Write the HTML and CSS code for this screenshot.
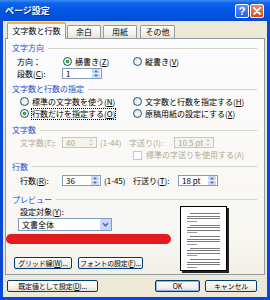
FILE: index.html
```html
<!DOCTYPE html>
<html lang="ja">
<head>
<meta charset="utf-8">
<link rel="stylesheet" href="styles.css">
</head>
<body>
<div class="win">
  <div class="title">
    <span class="ttext">ページ設定</span>
    <span class="tbtn help">?</span>
    <span class="tbtn close"><svg width="8" height="8" viewBox="0 0 8 8"><path d="M1 1L7 7M7 1L1 7" stroke="#fff" stroke-width="1.8" stroke-linecap="round"/></svg></span>
  </div>
  <div class="client">
    <div class="tabs">
      <div class="tab sel">文字数と行数</div>
      <div class="tab t2">余白</div>
      <div class="tab t3">用紙</div>
      <div class="tab t4">その他</div>
    </div>
    <div class="panel">
      <div class="hdr h1">文字方向</div>
      <div class="row r-dir">
        <span class="lbl w46">方向：</span>
        <span class="radio on c1">横書き(<u>Z</u>)</span>
        <span class="radio">縦書き(<u>V</u>)</span>
      </div>
      <div class="row r-cols">
        <span class="lbl w45">段数(<u>C</u>):</span>
        <span class="spin w40"><span class="val">1</span><svg class="arr" width="8" height="9" viewBox="0 0 8 9"><rect width="8" height="4.3" rx="1" fill="#C6D6FC"/><rect y="4.7" width="8" height="4.3" rx="1" fill="#C6D6FC"/><path d="M2 3.2L4 1.2L6 3.2Z" fill="#4D6185"/><path d="M2 5.8L4 7.8L6 5.8Z" fill="#4D6185"/></svg></span>
      </div>
      <div class="hdr h2">文字数と行数の指定</div>
      <div class="row r-rad1">
        <span class="radio c113">標準の文字数を使う(<u>N</u>)</span>
        <span class="radio">文字数と行数を指定する(<u>H</u>)</span>
      </div>
      <div class="row r-rad2">
        <span class="radio on c113"><span class="focus">行数だけを指定する(<u>O</u>)</span></span>
        <span class="radio">原稿用紙の設定にする(<u>X</u>)</span>
      </div>
      <div class="hdr h3">文字数</div>
      <div class="row r-chars dis">
        <span class="lbl w42">文字数(E):</span>
        <span class="spin w35 off"><span class="val">40</span><svg class="arr" width="8" height="9" viewBox="0 0 8 9"><path d="M2 3.2L4 1.2L6 3.2Z" fill="#C9C7BA"/><path d="M2 5.8L4 7.8L6 5.8Z" fill="#C9C7BA"/></svg></span>
        <span class="rng">(1-44)</span>
        <span class="lbl w45">字送り(I):</span>
        <span class="spin w40 off"><span class="val">10.5 pt</span><svg class="arr" width="8" height="9" viewBox="0 0 8 9"><path d="M2 3.2L4 1.2L6 3.2Z" fill="#C9C7BA"/><path d="M2 5.8L4 7.8L6 5.8Z" fill="#C9C7BA"/></svg></span>
      </div>
      <div class="row r-check dis">
        <span class="chk">標準の字送りを使用する(A)</span>
      </div>
      <div class="hdr h4">行数</div>
      <div class="row r-lines">
        <span class="lbl w42">行数(<u>R</u>):</span>
        <span class="spin w39"><span class="val">36</span><svg class="arr" width="8" height="9" viewBox="0 0 8 9"><rect width="8" height="4.3" rx="1" fill="#C6D6FC"/><rect y="4.7" width="8" height="4.3" rx="1" fill="#C6D6FC"/><path d="M2 3.2L4 1.2L6 3.2Z" fill="#4D6185"/><path d="M2 5.8L4 7.8L6 5.8Z" fill="#4D6185"/></svg></span>
        <span class="rng">(1-45)</span>
        <span class="lbl w45">行送り(<u>T</u>):</span>
        <span class="spin w40"><span class="val">18 pt</span><svg class="arr" width="8" height="9" viewBox="0 0 8 9"><rect width="8" height="4.3" rx="1" fill="#C6D6FC"/><rect y="4.7" width="8" height="4.3" rx="1" fill="#C6D6FC"/><path d="M2 3.2L4 1.2L6 3.2Z" fill="#4D6185"/><path d="M2 5.8L4 7.8L6 5.8Z" fill="#4D6185"/></svg></span>
      </div>
      <div class="hdr h5">プレビュー</div>
      <div class="preview">
        <div class="pleft">
          <div class="plabel">設定対象(<u>Y</u>):</div>
          <div class="select"><span class="val">文書全体</span><svg class="darr" width="11" height="11" viewBox="0 0 11 11"><rect width="11" height="11" rx="1.5" fill="#C6D6FC"/><path d="M3 4.2L5.5 6.7L8 4.2" stroke="#4D6185" stroke-width="1.4" fill="none"/></svg></div>
          <div class="redbar"></div>
          <div class="pbtns">
            <span class="btn b1">グリッド線(<u>W</u>)...</span>
            <span class="btn b2">フォントの設定(<u>F</u>)...</span>
          </div>
        </div>
        <div class="page">
          <div class="grp"><i class="ind"></i><i></i><i></i><i class="sh"></i></div>
          <div class="grp"><i class="ind"></i><i></i><i></i><i class="sh"></i></div>
          <div class="grp"><i class="ind"></i><i></i><i></i><i class="sh"></i></div>
          <div class="grp"><i class="ind"></i><i></i><i></i><i class="sh"></i></div>
          <div class="grp"><i class="ind"></i><i></i><i></i><i class="sh"></i></div>
        </div>
      </div>
    </div>
    <div class="footer">
      <span class="btn fb1">既定値として設定(<u>D</u>)...</span>
      <span class="spacer"></span>
      <span class="btn ok">OK</span>
      <span class="btn cancel">キャンセル</span>
    </div>
  </div>
</div>
</body>
</html>
```
FILE: styles.css
```css
* { box-sizing: border-box; margin: 0; padding: 0; }
html, body { width: 270px; height: 300px; overflow: hidden; }
body {
  font-family: "Noto Sans CJK JP", "Noto Sans", sans-serif;
  font-size: 8px;
  color: #000;
  background: #fff;
}
u { text-decoration: underline; text-underline-offset: 1px; }

.win {
  width: 270px;
  height: 300px;
  display: flex;
  flex-direction: column;
  background: #0A48D6;
}
.title {
  height: 21px;
  flex: none;
  display: flex;
  align-items: center;
  padding: 0 6px 0 5px;
  background: linear-gradient(#3C8DF7 0%, #0E62EB 15%, #0156E4 50%, #0152DF 85%, #0A46C6 100%);
}
.ttext {
  flex: 1;
  color: #fff;
  font-weight: bold;
  font-size: 9px;
  line-height: 21px;
  text-shadow: 1px 1px 0 #0A2E8C;
}
.tbtn {
  width: 14px;
  height: 14px;
  border: 1px solid #fff;
  border-radius: 2px;
  display: flex;
  align-items: center;
  justify-content: center;
  color: #fff;
  font-family: "Liberation Sans", sans-serif;
  font-weight: bold;
  font-size: 11px;
}
.help { background: linear-gradient(#5A93F8, #2460E6); margin-right: 1px; }
.close { background: linear-gradient(#EE8866, #D9461E); }

.client {
  flex: 1;
  margin: 0 3px 3px;
  background: #ECE9D8;
  display: flex;
  flex-direction: column;
}

.tabs {
  display: flex;
  align-items: flex-end;
  height: 16px;
  margin: 1px 0 0 4px;
  flex: none;
}
.tab {
  height: 13px;
  line-height: 12px;
  text-align: center;
  border: 1px solid #919B9C;
  border-bottom: none;
  border-radius: 2px 2px 0 0;
  background: linear-gradient(#FFFFFF, #F0EFEA 70%, #E4E2D8);
}
.tab.sel {
  width: 59px;
  height: 17px;
  margin-bottom: -1px;
  position: relative;
  z-index: 1;
  background: #FCFCFE;
  border-top: 2px solid #F8B13B;
  line-height: 14px;
}
.t2 { width: 34px; margin-left: 1px; }
.t3 { width: 34px; margin-left: 2px; }
.t4 { width: 35px; margin-left: 3px; }

.panel {
  height: 237px;
  flex: none;
  margin: 0 2px;
  border: 1px solid #919B9C;
  background: linear-gradient(#FCFCFE, #F7F6F1 85%, #F1EFE6);
  padding: 2px 7px 0 6px;
}
.hdr {
  height: 14px;
  line-height: 14px;
  color: #1A4ED0;
  display: flex;
  align-items: center;
}
.hdr::after {
  content: "";
  flex: 1;
  margin-left: 4px;
  border-top: 1px solid #D6D3C6;
}
.h2 { margin-top: 2px; }
.h3 { margin-top: 3px; }
.h4 { height: 13px; }
.h5 { height: 13px; margin-top: 6px; }

.row {
  display: flex;
  align-items: center;
  padding-left: 8px;
  white-space: nowrap;
}
.r-dir { height: 12px; padding-left: 5px; }
.r-cols { height: 13px; padding-left: 5px; }
.r-rad1 { height: 11px; }
.r-rad2 { height: 13px; }
.r-chars { height: 11px; }
.r-check { height: 12px; padding-left: 121px; }
.r-lines { height: 14px; }

.lbl { display: inline-block; }
.w42 { width: 42px; }
.w45 { width: 45px; }
.w46 { width: 46px; }
.c1 { width: 70px; }
.c113 { width: 113px; }
.rng { width: 32px; padding-left: 3px; }

.dis { color: #ACA899; }

.radio {
  display: inline-flex;
  align-items: center;
}
.radio::before {
  content: "";
  width: 7px;
  height: 7px;
  border-radius: 50%;
  border: 1px solid #1C5180;
  background: radial-gradient(circle at 60% 60%, #FFFFFF, #DCDBD3);
  margin-right: 3px;
  flex: none;
}
.radio.on::before {
  background: radial-gradient(circle, #4CC84C 0, #1F9D1F 1.6px, #FFFFFF 2.2px, #E6E5DD 4px);
}
.focus {
  outline: 1px dotted #000;
  outline-offset: 0;
  line-height: 10px;
}

.chk {
  display: inline-flex;
  align-items: center;
}
.chk::before {
  content: "";
  width: 7px;
  height: 7px;
  border: 1px solid #C9C7BA;
  background: #fff;
  margin-right: 4px;
  margin-top: 3px;
}

.spin {
  height: 11px;
  border: 1px solid #7F9DB9;
  background: #fff;
  display: flex;
  align-items: center;
  justify-content: space-between;
  padding: 0 1px 0 3px;
  color: #000;
}
.spin.off {
  border-color: #C9C7BA;
  background: #F5F4EA;
  color: #ACA899;
}
.w35 { width: 35px; }
.w39 { width: 39px; }
.w40 { width: 40px; }
.arr { flex: none; }

.preview {
  display: flex;
  padding-left: 2px;
}
.pleft {
  width: 166px;
  position: relative;
}
.plabel {
  height: 11px;
  line-height: 11px;
  padding-left: 6px;
}
.select {
  margin: 1px 0 0 4px;
  width: 94px;
  height: 13px;
  border: 1px solid #7F9DB9;
  background: #fff;
  display: flex;
  align-items: center;
  justify-content: space-between;
  padding: 0 0 0 3px;
}
.redbar {
  position: absolute;
  left: -8px;
  top: 28px;
  width: 165px;
  height: 10px;
  border-radius: 5px;
  background: #E21B1F;
}
.pbtns {
  margin-top: 26px;
  display: flex;
  gap: 6px;
}
.btn {
  height: 12px;
  display: inline-flex;
  align-items: center;
  justify-content: center;
  border: 1px solid #003C74;
  border-radius: 2px;
  background: linear-gradient(#FFFFFF, #F3F2EC 60%, #E3E0D4);
  white-space: nowrap;
  font-size: 7px;
  letter-spacing: -0.2px;
}
.b1 { width: 58px; }
.b2 { width: 65px; }

.page {
  width: 47px;
  height: 65px;
  background: #fff;
  border: 1px solid #000;
  box-shadow: 2px 2px 0 #222;
  padding: 6px 6px 0 6px;
}
.grp { margin-bottom: 3px; }
.grp i {
  display: block;
  height: 1px;
  background: #7A7A7A;
  margin-bottom: 1.5px;
}
.grp i.ind { margin-left: 3px; }
.grp i.sh { width: 10px; background: #999; }

.footer {
  flex: 1;
  display: flex;
  align-items: flex-start;
  padding: 5px 10px 0 4px;
}
.fb1 { width: 91px; }
.spacer { flex: 1; }
.ok { width: 45px; box-shadow: inset 0 0 0 1px #8DB2F3; }
.cancel { width: 52px; margin-left: 5px; }
```
